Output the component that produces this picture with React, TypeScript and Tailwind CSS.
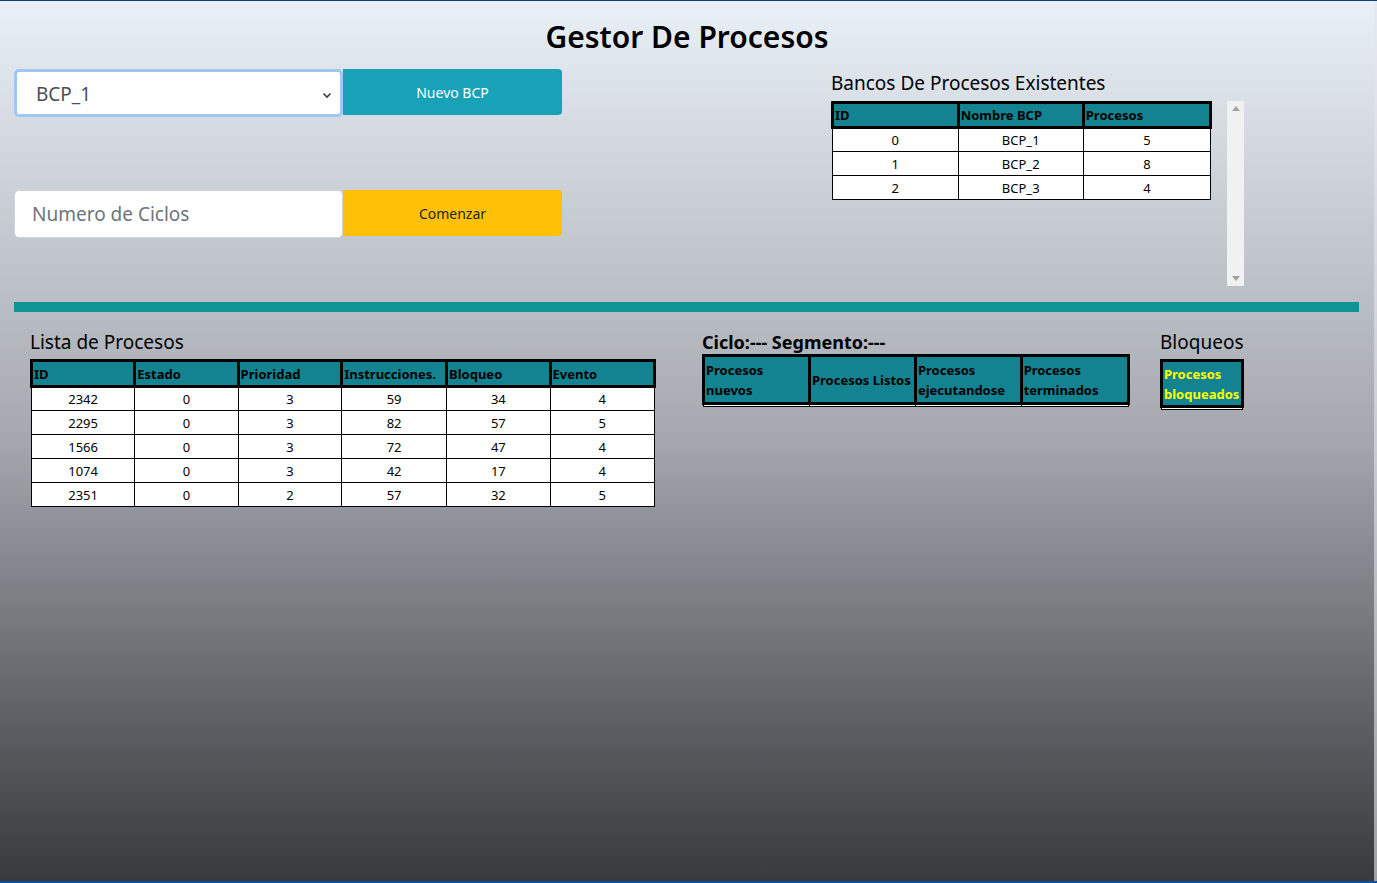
import React from "react";

const font = { fontFamily: '"Noto Sans", "Open Sans", sans-serif' };

const procesos = [
  [2342, 0, 3, 59, 34, 4],
  [2295, 0, 3, 82, 57, 5],
  [1566, 0, 3, 72, 47, 4],
  [1074, 0, 3, 42, 17, 4],
  [2351, 0, 2, 57, 32, 5],
];

const bancos = [
  [0, "BCP_1", 5],
  [1, "BCP_2", 8],
  [2, "BCP_3", 4],
];

function Th({ children, w }: { children: React.ReactNode; w: string }) {
  return (
    <th
      className={`${w} border-[3px] border-black bg-[#138391] px-0 pl-[1px] text-left align-middle text-[13px] font-bold leading-[20px] text-black`}
    >
      {children}
    </th>
  );
}

function Td({ children }: { children: React.ReactNode }) {
  return (
    <td className="border border-black bg-white p-0 text-center text-[13px] leading-[22px] text-black">
      {children}
    </td>
  );
}

export default function App() {
  return (
    <div
      className="relative flex h-[883px] w-full overflow-hidden border-t border-b-2 border-t-[#0b3b78] border-b-[#0f4f9a] bg-gradient-to-b from-[#eaf0f7] via-[#a4a8ae] to-[#393a3e]"
      style={font}
    >
      <div className="flex min-w-0 flex-1 flex-col">
        <h1 className="mt-[17px] text-center text-[30px] font-semibold leading-[38px] text-black">
          Gestor De Procesos
        </h1>

        <div className="mt-[13px] flex items-start">
          {/* left controls */}
          <div className="ml-[14px] flex w-[548px] flex-col">
            <div className="flex h-[48px]">
              <div className="flex h-[48px] w-[329px] items-center justify-between rounded-[5px] border-[3px] border-[#9fc7f7] bg-white pl-[19px] pr-[8px] pt-[3px]">
                <span className="text-[19px] text-[#495057]">BCP_1</span>
                <svg width="10" height="8" viewBox="0 0 10 8">
                  <path d="M1.5 2.5 L5 6 L8.5 2.5" fill="none" stroke="#343a40" strokeWidth="1.6" />
                </svg>
              </div>
              <button className="h-[46px] w-[219px] rounded-r-[4px] bg-[#17a2b8] text-[14px] text-white">
                Nuevo BCP
              </button>
            </div>
            <div className="mt-[73px] flex h-[48px]">
              <div className="flex h-[48px] w-[329px] items-center rounded-[5px] border border-[#ced4da] bg-white pl-[17px]">
                <span className="text-[19px] text-[#6c757d]">Numero de Ciclos</span>
              </div>
              <button className="h-[46px] w-[219px] rounded-r-[4px] bg-[#ffc107] text-[14px] text-[#212529]">
                Comenzar
              </button>
            </div>
          </div>

          {/* right: bancos */}
          <div className="ml-[269px] mt-[1px] flex flex-col">
            <h2 className="text-[19px] leading-[26px] text-black">Bancos De Procesos Existentes</h2>
            <div className="mt-[5px] flex items-start">
              <table className="w-[381px] border-collapse">
                <thead>
                  <tr className="h-[25px]">
                    <Th w="w-[127px]">ID</Th>
                    <Th w="w-[126px]">Nombre BCP</Th>
                    <Th w="w-[128px]">Procesos</Th>
                  </tr>
                </thead>
                <tbody>
                  {bancos.map((r) => (
                    <tr key={r[0]} className="h-[24px]">
                      {r.map((c, i) => (
                        <Td key={i}>{c}</Td>
                      ))}
                    </tr>
                  ))}
                </tbody>
              </table>
              <div className="ml-[15px] flex h-[185px] w-[17px] flex-col items-center justify-between bg-[#f1f1f1] py-[5px]">
                <svg width="8" height="5" viewBox="0 0 8 5">
                  <path d="M0 5 L4 0 L8 5 Z" fill="#a3a3a3" />
                </svg>
                <svg width="8" height="5" viewBox="0 0 8 5">
                  <path d="M0 0 L4 5 L8 0 Z" fill="#a3a3a3" />
                </svg>
              </div>
            </div>
          </div>
        </div>

        <div className="ml-[14px] mr-[15px] mt-[16px] h-[10px] bg-[#0e9494]" />

        <div className="mt-[17px] flex items-start">
          {/* Lista de procesos */}
          <div className="ml-[30px] flex w-[626px] flex-col">
            <h2 className="text-[19px] leading-[26px] text-black">Lista de Procesos</h2>
            <table className="mt-[4px] w-[626px] border-collapse">
              <thead>
                <tr className="h-[26px]">
                  <Th w="w-[104px]">ID</Th>
                  <Th w="w-[104px]">Estado</Th>
                  <Th w="w-[104px]">Prioridad</Th>
                  <Th w="w-[105px]">Instrucciones.</Th>
                  <Th w="w-[104px]">Bloqueo</Th>
                  <Th w="w-[105px]">Evento</Th>
                </tr>
              </thead>
              <tbody>
                {procesos.map((r) => (
                  <tr key={r[0]} className="h-[24px]">
                    {r.map((c, i) => (
                      <Td key={i}>{c}</Td>
                    ))}
                  </tr>
                ))}
              </tbody>
            </table>
          </div>

          {/* Ciclo */}
          <div className="ml-[46px] flex w-[428px] flex-col">
            <h2 className="text-[18px] font-bold leading-[26px] text-black">Ciclo:--- Segmento:---</h2>
            <table className="mt-[-1px] w-[428px] border-collapse">
              <thead>
                <tr className="h-[48px]">
                  <Th w="w-[107px]">Procesos nuevos</Th>
                  <Th w="w-[107px]">Procesos Listos</Th>
                  <Th w="w-[106px]">Procesos ejecutandose</Th>
                  <Th w="w-[108px]">Procesos terminados</Th>
                </tr>
              </thead>
              <tbody>
                <tr className="h-[3px]">
                  <td className="h-[3px] border border-black bg-white p-0" />
                  <td className="h-[3px] border border-black bg-white p-0" />
                  <td className="h-[3px] border border-black bg-white p-0" />
                  <td className="h-[3px] border border-black bg-white p-0" />
                </tr>
              </tbody>
            </table>
          </div>

          {/* Bloqueos */}
          <div className="ml-[30px] flex w-[84px] flex-col">
            <h2 className="text-[19px] leading-[26px] text-black">Bloqueos</h2>
            <table className="mt-[4px] w-[84px] border-collapse">
              <thead>
                <tr className="h-[46px]">
                  <th className="border-[3px] border-black bg-[#138391] p-0 pl-[1px] text-left text-[13px] font-bold leading-[20px] text-[#ffff00]">
                    Procesos bloqueados
                  </th>
                </tr>
              </thead>
              <tbody>
                <tr>
                  <td className="h-[3px] border border-black bg-white p-0" />
                </tr>
              </tbody>
            </table>
          </div>
        </div>
      </div>
      <div className="w-[3px] shrink-0 bg-[#e2e6eb]/60" />
    </div>
  );
}
